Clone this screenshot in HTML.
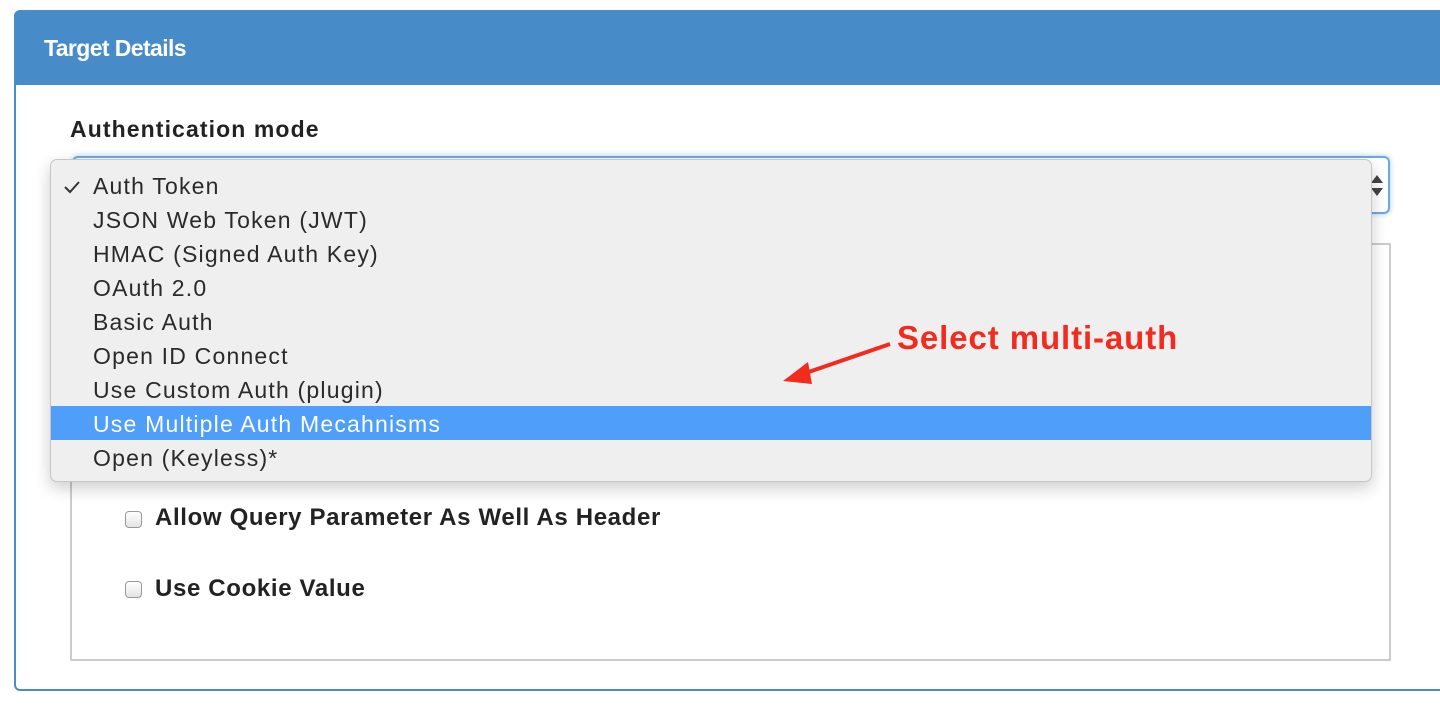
<!DOCTYPE html>
<html><head><style>
body{margin:0;width:1440px;height:708px;background:#fff;position:relative;overflow:hidden;font-family:"Liberation Sans",Arial,sans-serif}
.panel{position:absolute;left:14px;top:10px;width:1440px;height:681px;border:2px solid #4a8bc9;border-radius:6px;box-sizing:border-box}
.hdr{position:absolute;left:0;top:0;right:0;height:73px;background:#478bc8}
.hdr span{position:absolute;left:28px;top:23px;color:#fff;font-size:23px;font-weight:bold;letter-spacing:-0.6px}
.lbl{position:absolute;left:70px;top:116px;font-size:23px;font-weight:bold;color:#222;letter-spacing:1.1px}
.sel{position:absolute;left:72px;top:156px;width:1318px;height:58px;border:2px solid #6aa9e2;border-radius:6px;box-sizing:border-box;box-shadow:0 0 6px #a9cff2}
.inner{position:absolute;left:70px;top:243px;width:1321px;height:418px;border:2px solid #ccc;box-sizing:border-box}
.dd{position:absolute;left:50px;top:159px;width:1322px;height:323px;background:#efefef;border:1px solid #c6c6c6;border-radius:7px;box-sizing:border-box;box-shadow:0 6px 16px rgba(0,0,0,.2)}
.it{position:absolute;left:42px;font-size:23px;color:#2a2a2a;height:34px;line-height:34px;letter-spacing:1.2px}
.hl{position:absolute;left:0;right:0;top:246px;height:34px;background:#4f9ef9}
.cb{position:absolute;left:125px;width:17px;height:17px;border:1px solid #999;border-radius:4px;background:linear-gradient(#fff,#e4e4e4);box-sizing:border-box}
.ct{position:absolute;left:155px;font-size:24px;font-weight:bold;color:#222;letter-spacing:0.65px}
</style></head><body>
<div class="panel"><div class="hdr"><span>Target Details</span></div></div>
<div class="lbl">Authentication mode</div>
<div class="sel"></div>
<svg style="position:absolute;left:1370px;top:173px" width="14" height="26"><path d="M1 10L7 2L13 10Z M1 15L7 23L13 15Z" fill="#444"/></svg>
<div class="inner"></div>
<div class="cb" style="top:511px"></div><div class="ct" style="top:504px">Allow Query Parameter As Well As Header</div>
<div class="cb" style="top:581px"></div><div class="ct" style="top:575px">Use Cookie Value</div>
<div class="dd">
<div class="hl"></div>
<svg style="position:absolute;left:12px;top:20px" width="18" height="14"><path d="M2 7L7 12L16 2" stroke="#333" stroke-width="2" fill="none"/></svg>
<div class="it" style="top:9px">Auth Token</div>
<div class="it" style="top:43px">JSON Web Token (JWT)</div>
<div class="it" style="top:77px">HMAC (Signed Auth Key)</div>
<div class="it" style="top:111px">OAuth 2.0</div>
<div class="it" style="top:145px">Basic Auth</div>
<div class="it" style="top:179px">Open ID Connect</div>
<div class="it" style="top:213px">Use Custom Auth (plugin)</div>
<div class="it" style="top:247px;color:#fff">Use Multiple Auth Mecahnisms</div>
<div class="it" style="top:281px">Open (Keyless)*</div>
</div>
<svg style="position:absolute;left:0;top:0" width="1440" height="708"><line x1="890" y1="344" x2="800" y2="375" stroke="#f22b1f" stroke-width="4"/><path d="M783 381L808 362L812 384Z" fill="#f22b1f"/></svg>
<div style="position:absolute;left:897px;top:319px;font-size:33px;font-weight:bold;color:#f22b1f;letter-spacing:0.9px">Select multi-auth</div>
</body></html>
